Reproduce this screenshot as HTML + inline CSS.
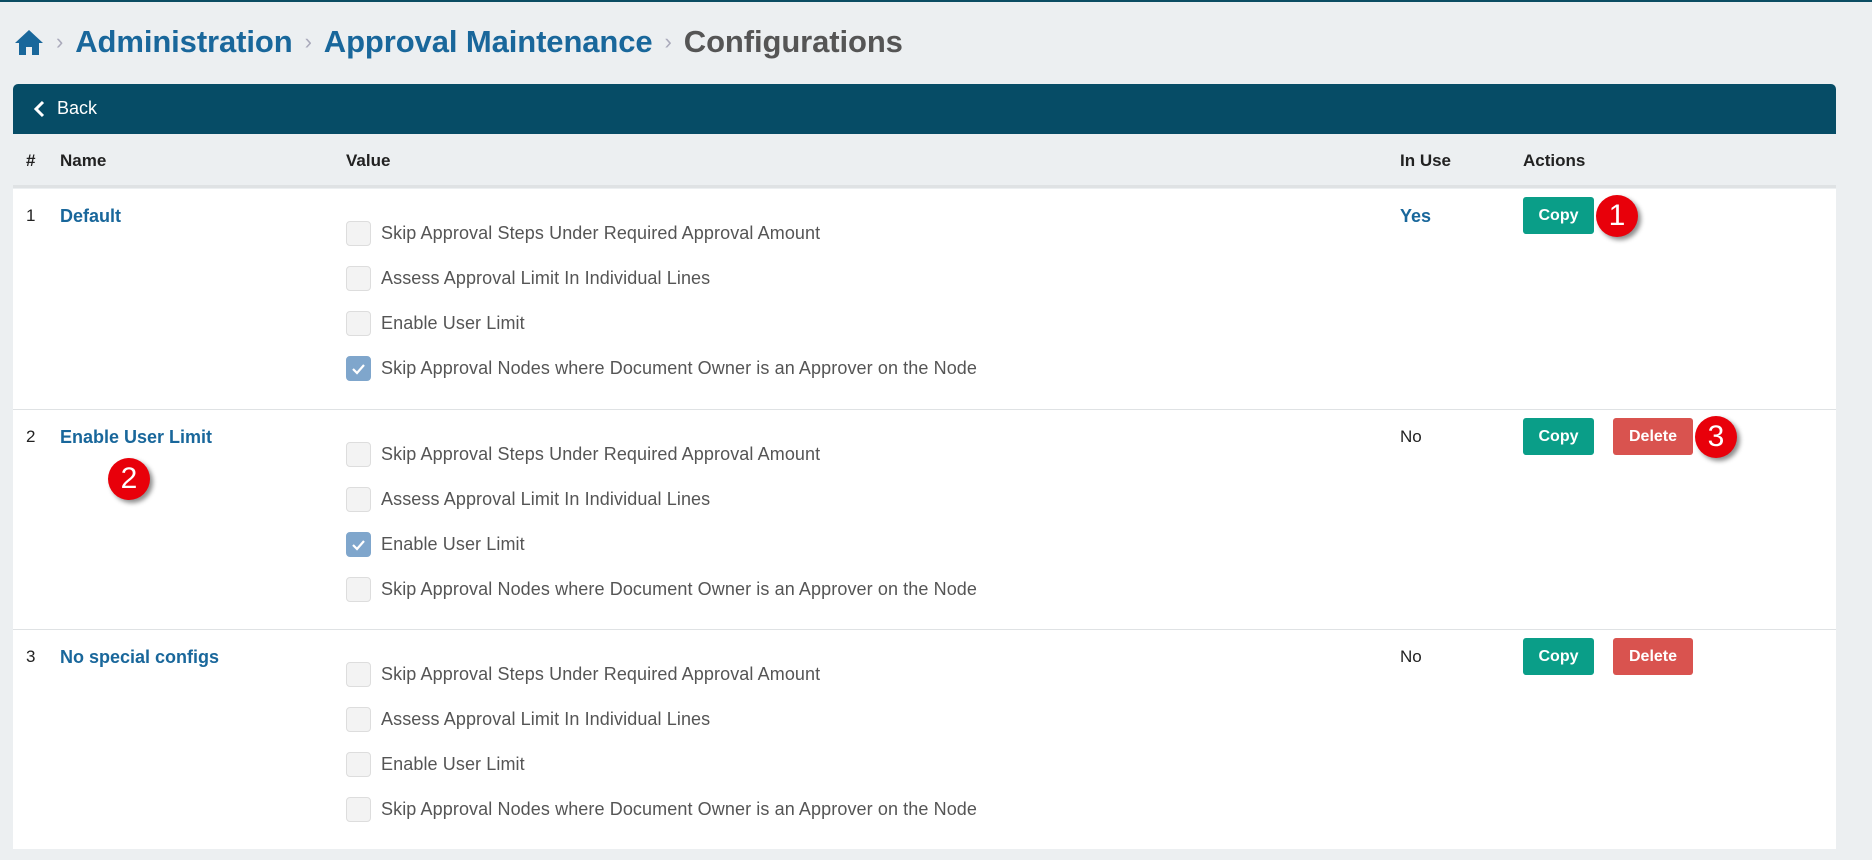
<!DOCTYPE html>
<html><head><meta charset="utf-8"><style>
*{box-sizing:border-box;margin:0;padding:0}
body{width:1872px;height:836px;overflow:hidden;background:#eceff1;font-family:"Liberation Sans",sans-serif;position:relative;color:#222}
.topline{position:absolute;left:0;top:0;width:1872px;height:2px;background:#0b4d63}
.bc{position:absolute;top:22px;left:14px;height:40px;display:flex;align-items:center;font-weight:bold;font-size:31px;letter-spacing:-0.1px}
.bc .l{color:#19679b}
.bc .s{color:#aab;font-weight:normal;font-size:22px;margin:0 12px}
.bc .c{color:#555}
.bar{position:absolute;left:13px;top:84px;width:1823px;height:50px;background:#064c66;border-radius:5px 5px 0 0;color:#fff;font-size:18px}
.bar span{position:absolute;left:44px;top:14px}
.hdr{position:absolute;left:13px;top:134px;width:1823px;height:54px;border-bottom:3px solid #dfe2e4;font-weight:bold;font-size:17px}
.a{position:absolute}
.tbl{position:absolute;left:13px;top:189px;width:1823px;height:660px;background:#fff}
.row{position:absolute;left:0;width:1823px;border-bottom:1px solid #dfe2e4}
.name{color:#19679b;font-weight:bold;font-size:18px}
.cb{position:absolute;left:333px;width:25px;height:25px;border:1px solid #ddd;border-radius:4px;background:#f3f3f3}
.cb.on{background:#7fa6cc;border-color:#7fa6cc}
.lab{position:absolute;left:368px;font-size:18px;color:#555;letter-spacing:0.1px}
.btn{position:absolute;height:37px;border-radius:3px;color:#fff;font-weight:bold;font-size:16px;text-align:center;line-height:37px}
.copy{background:#0a9e88;width:71px;left:1510px}
.del{background:#d9534f;width:80px;left:1600px}
.num{position:absolute;width:42px;height:42px;border-radius:50%;background:#e8000a;color:#fff;font-size:30px;text-align:center;line-height:42px;box-shadow:3px 3px 5px rgba(0,0,0,.45)}
</style></head><body>
<div class="topline"></div>
<div class="bc">
<svg width="30" height="28" viewBox="0 0 30 28"><path d="M15 2 L1 15 L5 15 L5 27 L12 27 L12 19 L18 19 L18 27 L25 27 L25 15 L29 15 Z" fill="#19679b"/></svg>
<span class="s">›</span><span class="l">Administration</span><span class="s">›</span><span class="l">Approval Maintenance</span><span class="s">›</span><span class="c">Configurations</span></div>
<div class="bar"><svg style="position:absolute;left:20px;top:16px" width="12" height="18" viewBox="0 0 12 18"><path d="M10 2 L3 9 L10 16" stroke="#fff" stroke-width="3" fill="none"/></svg><span>Back</span></div>
<div class="hdr">
<div class="a" style="left:13px;top:17px">#</div>
<div class="a" style="left:47px;top:17px">Name</div>
<div class="a" style="left:333px;top:17px">Value</div>
<div class="a" style="left:1387px;top:17px">In Use</div>
<div class="a" style="left:1510px;top:17px">Actions</div>
</div>
<div class="tbl">
<div class="row" style="top:0;height:221px">
<div class="a" style="left:13px;top:17px;font-size:17px">1</div>
<div class="a name" style="left:47px;top:17px">Default</div>
<div class="cb" style="top:32px"></div><div class="lab" style="top:34px">Skip Approval Steps Under Required Approval Amount</div>
<div class="cb" style="top:77px"></div><div class="lab" style="top:79px">Assess Approval Limit In Individual Lines</div>
<div class="cb" style="top:122px"></div><div class="lab" style="top:124px">Enable User Limit</div>
<div class="cb on" style="top:167px"><svg width="23" height="23" viewBox="0 0 23 23"><path d="M6 12 L10 16 L17 8" stroke="#fff" stroke-width="2.2" fill="none"/></svg></div><div class="lab" style="top:169px">Skip Approval Nodes where Document Owner is an Approver on the Node</div>
<div class="a name" style="left:1387px;top:17px">Yes</div>
<div class="btn copy" style="top:8px">Copy</div>
</div>
<div class="row" style="top:221px;height:220px">
<div class="a" style="left:13px;top:17px;font-size:17px">2</div>
<div class="a name" style="left:47px;top:17px">Enable User Limit</div>
<div class="cb" style="top:32px"></div><div class="lab" style="top:34px">Skip Approval Steps Under Required Approval Amount</div>
<div class="cb" style="top:77px"></div><div class="lab" style="top:79px">Assess Approval Limit In Individual Lines</div>
<div class="cb on" style="top:122px"><svg width="23" height="23" viewBox="0 0 23 23"><path d="M6 12 L10 16 L17 8" stroke="#fff" stroke-width="2.2" fill="none"/></svg></div><div class="lab" style="top:124px">Enable User Limit</div>
<div class="cb" style="top:167px"></div><div class="lab" style="top:169px">Skip Approval Nodes where Document Owner is an Approver on the Node</div>
<div class="a" style="left:1387px;top:17px;font-size:17px">No</div>
<div class="btn copy" style="top:8px">Copy</div><div class="btn del" style="top:8px">Delete</div>
</div>
<div class="row" style="top:441px;height:230px;border:none">
<div class="a" style="left:13px;top:17px;font-size:17px">3</div>
<div class="a name" style="left:47px;top:17px">No special configs</div>
<div class="cb" style="top:32px"></div><div class="lab" style="top:34px">Skip Approval Steps Under Required Approval Amount</div>
<div class="cb" style="top:77px"></div><div class="lab" style="top:79px">Assess Approval Limit In Individual Lines</div>
<div class="cb" style="top:122px"></div><div class="lab" style="top:124px">Enable User Limit</div>
<div class="cb" style="top:167px"></div><div class="lab" style="top:169px">Skip Approval Nodes where Document Owner is an Approver on the Node</div>
<div class="a" style="left:1387px;top:17px;font-size:17px">No</div>
<div class="btn copy" style="top:8px">Copy</div><div class="btn del" style="top:8px">Delete</div>
</div>
</div>
<div class="num" style="left:1596px;top:195px">1</div>
<div class="num" style="left:108px;top:458px">2</div>
<div class="num" style="left:1695px;top:416px">3</div>
</body></html>
